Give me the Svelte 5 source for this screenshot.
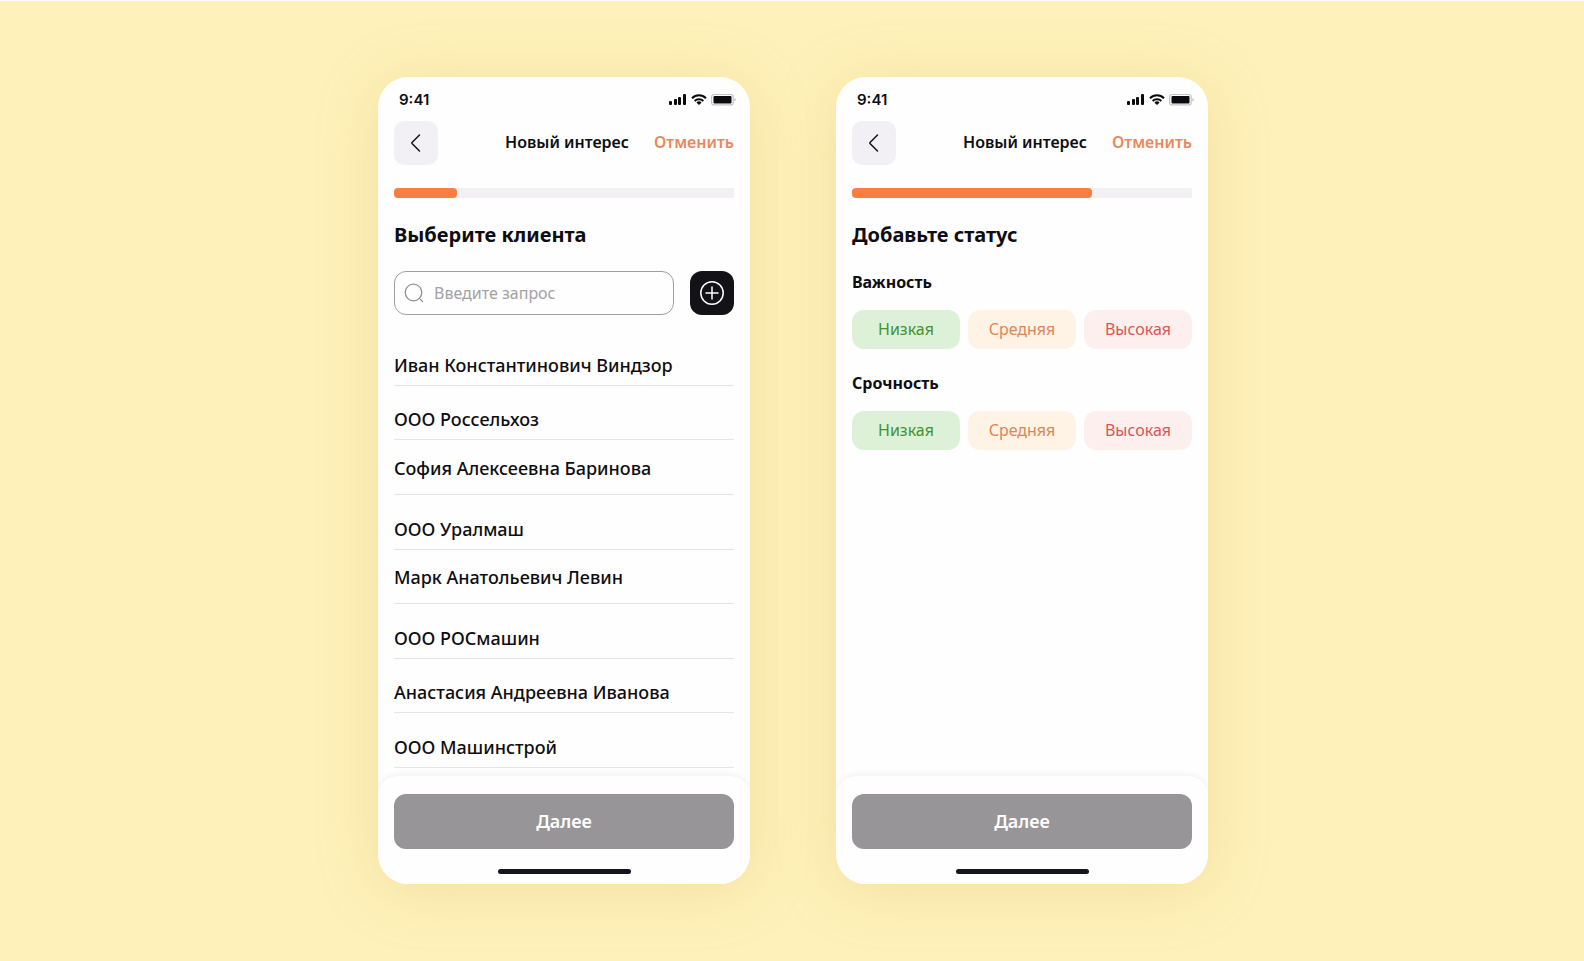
<script lang="ts">
    const clients = [
        { name: "Иван Константинович Виндзор", raised: false },
        { name: "ООО Россельхоз", raised: false },
        { name: "София Алексеевна Баринова", raised: true },
        { name: "ООО Уралмаш", raised: false },
        { name: "Марк Анатольевич Левин", raised: true },
        { name: "ООО РОСмашин", raised: false },
        { name: "Анастасия Андреевна Иванова", raised: false },
        { name: "ООО Машинстрой", raised: false },
    ];

    const groups = ["Важность", "Срочность"];
    const levels = [
        { label: "Низкая", kind: "low" },
        { label: "Средняя", kind: "medium" },
        { label: "Высокая", kind: "high" },
    ];

    let query = $state("");
</script>

{#snippet top(progress: number)}
    <div class="statusBar">
        <span class="time">9:41</span>
        <svg width="67" height="14" viewBox="0 -1 67 14" aria-hidden="true">
            <g fill="#0b0a0f">
                <rect x="0" y="8" width="3" height="4" rx="1" />
                <rect x="5" y="6" width="3" height="6" rx="1" />
                <rect x="9" y="4" width="3" height="8" rx="1" />
                <rect x="14" y="1" width="3" height="11" rx="1" />
                <path d="M30 12 L27.4 9.4 A3.8 3.8 0 0 1 32.6 9.4 Z" />
                <rect x="44.5" y="3" width="18" height="7.5" rx="1" />
            </g>
            <g fill="none" stroke="#0b0a0f" stroke-width="2">
                <path d="M23 5.2 A10 10 0 0 1 37 5.2" />
                <path d="M25.6 7.9 A6.4 6.4 0 0 1 34.4 7.9" />
            </g>
            <rect x="42.6" y="1.5" width="21.6" height="10.4" rx="2.5" fill="none" stroke="#c3c2c6" stroke-width="1.2" />
            <path d="M65.4 5 Q67 5.6 67 6.8 Q67 8 65.4 8.6 Z" fill="#c3c2c6" />
        </svg>
    </div>
    <header>
        <button class="back" aria-label="Назад">
            <svg width="24" height="24" viewBox="0 0 24 24" fill="none" stroke="#131216" stroke-width="1.5" stroke-linecap="round" stroke-linejoin="round">
                <path d="M15.5 4 L8 11.5 Q7.6 12 8 12.5 L15.5 20" />
            </svg>
        </button>
        <span class="pageName">Новый интерес</span>
        <button class="cancel">Отменить</button>
    </header>
    <div class="track" role="progressbar" aria-label="Прогресс" aria-valuenow={progress}>
        <div class="fill" style="width: {progress}%"></div>
    </div>
{/snippet}

{#snippet bottom()}
    <footer>
        <button class="next">Далее</button>
        <div class="homeBar"></div>
    </footer>
{/snippet}

<main>
    <section class="phone">
        {@render top(18.5)}
        <h1>Выберите клиента</h1>
        <div class="searchRow">
            <label class="search">
                <svg width="20" height="20" viewBox="0 0 20 20" fill="none" stroke="#929095" stroke-width="1.3" stroke-linecap="round" aria-hidden="true">
                    <circle cx="9.5" cy="9.5" r="8.3" />
                    <path d="M16.5 16.5 L18.5 18.5" />
                </svg>
                <input type="text" placeholder="Введите запрос" aria-label="Поиск клиента" bind:value={query} />
            </label>
            <button class="add" aria-label="Добавить клиента">
                <svg width="24" height="24" viewBox="0 0 24 24" fill="none" stroke="#ffffff" stroke-width="1.5" stroke-linecap="round">
                    <circle cx="12" cy="12" r="11.2" />
                    <path d="M12 6 V18 M6 12 H18" />
                </svg>
            </button>
        </div>
        <ul class="clients">
            {#each clients as client}
                <li>
                    <span class:raised={client.raised}>{client.name}</span>
                </li>
            {/each}
        </ul>
        {@render bottom()}
    </section>

    <section class="phone">
        {@render top(70.6)}
        <h1>Добавьте статус</h1>
        <div class="groups">
            {#each groups as group}
                <div role="group" aria-label={group}>
                    <h2>{group}</h2>
                    <div class="chips">
                        {#each levels as level}
                            <button class="chip {level.kind}">{level.label}</button>
                        {/each}
                    </div>
                </div>
            {/each}
        </div>
        {@render bottom()}
    </section>
</main>

<style>
    :global(body){
        margin: 0;
        background-color: #fef1ba;
    }

    main{
        box-sizing: border-box;
        min-height: 100vh;
        padding: 76px 16px 77px 18px;
        border-top: 1px solid #ffffff;
        display: flex;
        flex-wrap: wrap;
        justify-content: center;
        gap: 86px;
        font-family: "Noto Sans", sans-serif;
        color: #0e0d11;
    }

    button{
        font-family: inherit;
        border: none;
        padding: 0;
        cursor: pointer;
    }

    svg{
        display: block;
    }

    .phone{
        box-sizing: border-box;
        width: 372px;
        padding: 0 16px;
        display: flex;
        flex-direction: column;
        background-color: #fefefe;
        border-radius: 30px;
        overflow: hidden;
        box-shadow: 0 6px 60px rgba(215, 180, 90, 0.28);
    }

    .statusBar{
        height: 44px;
        margin-right: -2px;
        padding-left: 5px;
        display: flex;
        align-items: center;
        justify-content: space-between;
    }

    .time{
        font-family: Inter, sans-serif;
        font-size: 15px;
        font-weight: 600;
    }

    header{
        display: flex;
        align-items: center;
        gap: 25px;
        font-size: 16px;
    }

    .back{
        width: 44px;
        height: 44px;
        margin-right: auto;
        display: grid;
        place-items: center;
        border-radius: 10px;
        background-color: #f2f0f4;
    }

    .pageName, .cancel{
        padding-bottom: 2px;
        font-size: 16px;
        font-weight: 600;
    }

    .cancel{
        background: none;
        color: #e9885a;
    }

    .track{
        height: 10px;
        margin-top: 23px;
        border-radius: 5px 0 0 5px;
        background-color: #f2f0f2;
    }

    .fill{
        height: 100%;
        border-radius: 4px;
        background-color: #f97f40;
    }

    h1{
        margin: 23px 0 22px;
        font-size: 20px;
        line-height: 28px;
        font-weight: 700;
    }

    .searchRow{
        display: flex;
        gap: 16px;
    }

    .search{
        flex: 1;
        min-width: 0;
        box-sizing: border-box;
        height: 44px;
        padding: 0 9px;
        display: flex;
        align-items: center;
        gap: 10px;
        border: 1px solid #a09ea3;
        border-radius: 12px;
    }

    .search input{
        flex: 1;
        min-width: 0;
        padding: 0;
        border: none;
        outline: none;
        background: none;
        font-family: inherit;
        font-size: 16px;
    }

    .search input::placeholder{
        color: #a3a1a5;
        opacity: 1;
    }

    .add{
        width: 44px;
        height: 44px;
        display: grid;
        place-items: center;
        border-radius: 12px;
        background-color: #131216;
    }

    .clients{
        flex: 1;
        margin: 16px 0 8px;
        padding: 0;
        display: flex;
        flex-direction: column;
        list-style: none;
    }

    .clients li{
        flex: 1;
        display: flex;
        align-items: flex-end;
        border-bottom: 1px solid #e4e3e6;
        font-size: 18px;
        line-height: 24px;
        font-weight: 500;
    }

    .clients span{
        padding-bottom: 8px;
    }

    .clients .raised{
        padding-bottom: 14px;
    }

    .groups{
        flex: 1;
        display: flex;
        flex-direction: column;
        gap: 23px;
    }

    h2{
        margin: 0 0 17px;
        font-size: 16px;
        line-height: 22px;
        font-weight: 700;
    }

    .chips{
        display: flex;
        gap: 8px;
    }

    .chip{
        flex: 1;
        height: 39px;
        padding-bottom: 1px;
        border-radius: 12px;
        font-size: 16px;
    }

    .low{
        background-color: #dcf1d8;
        color: #42942c;
    }

    .medium{
        background-color: #fff3e5;
        color: #dc8556;
    }

    .high{
        background-color: #feefef;
        color: #db5652;
    }

    footer{
        margin: 0 -16px;
        padding: 18px 16px 10px;
        display: flex;
        flex-direction: column;
        align-items: center;
        gap: 20px;
        border-radius: 20px 20px 0 0;
        background-color: #fefefe;
        box-shadow: 0 -2px 5px rgba(70, 50, 100, 0.06);
    }

    .next{
        width: 100%;
        height: 55px;
        padding-bottom: 2px;
        border-radius: 12px;
        background-color: #979598;
        color: #ffffff;
        font-size: 18px;
        font-weight: 600;
    }

    .homeBar{
        width: 133px;
        height: 5px;
        border-radius: 3px;
        background-color: #171420;
    }
</style>
